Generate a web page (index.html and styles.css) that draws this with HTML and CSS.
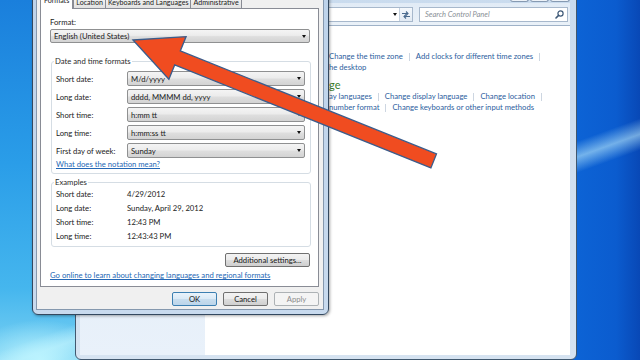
FILE: index.html
```html
<!DOCTYPE html>
<html lang="en">
<head>
<meta charset="utf-8">
<title>Region and Language</title>
<link rel="stylesheet" href="styles.css">
</head>
<body>
<div class="desktop">
  <section class="cp-window">
    <div class="cp-caption">
      <span class="cap-btn"></span><span class="cap-btn"></span><span class="cap-btn cap-close"></span>
    </div>
    <div class="cp-toolbar">
      <div class="address">
        <span class="addr-drop"><i class="caret"></i></span>
        <span class="addr-refresh">
          <svg width="10" height="9" viewBox="0 0 10 9"><path d="M1 3.5h6M5 1.5l2 2-2 2" fill="none" stroke="#4a6a8e" stroke-width="1.1"/><path d="M9 6.5H3M5 4.5l-2 2 2 2" fill="none" stroke="#4a6a8e" stroke-width="1.1"/></svg>
        </span>
      </div>
      <div class="search">
        <span class="search-text">Search Control Panel</span>
        <svg class="search-icon" width="9" height="9" viewBox="0 0 9 9"><circle cx="5.5" cy="3.5" r="2.6" fill="none" stroke="#3d5877" stroke-width="1.2"/><path d="M3.6 5.4L1 8" stroke="#3d5877" stroke-width="1.6" stroke-linecap="round"/></svg>
      </div>
    </div>
    <div class="cp-body">
      <nav class="cp-nav"></nav>
      <main class="cp-main">
        <p class="cp-line"><a>Change the time zone</a><i class="sep"></i><a>Add clocks for different time zones</a><i class="sep"></i></p>
        <p class="cp-line"><a>he desktop</a></p>
        <h2 class="cp-head">ge</h2>
        <p class="cp-line"><a>ay languages</a><i class="sep"></i><a>Change display language</a><i class="sep"></i><a>Change location</a><i class="sep"></i></p>
        <p class="cp-line"><a>number format</a><i class="sep"></i><a>Change keyboards or other input methods</a></p>
      </main>
    </div>
  </section>

  <section class="dialog">
    <div class="dlg-caption"></div>
    <div class="dlg-client">
      <div class="tabs">
        <span class="tab active">Formats</span>
        <span class="tab">Location</span>
        <span class="tab">Keyboards and Languages</span>
        <span class="tab">Administrative</span>
      </div>
      <div class="tab-panel">
        <div class="field-label">Format:</div>
        <div class="combo wide"><span>English (United States)</span><i class="caret"></i></div>

        <fieldset class="group formats">
          <legend>Date and time formats</legend>
          <div class="row"><span class="lbl">Short date:</span><div class="combo"><span>M/d/yyyy</span><i class="caret"></i></div></div>
          <div class="row"><span class="lbl">Long date:</span><div class="combo"><span>dddd, MMMM dd, yyyy</span><i class="caret"></i></div></div>
          <div class="row"><span class="lbl">Short time:</span><div class="combo"><span>h:mm tt</span><i class="caret"></i></div></div>
          <div class="row"><span class="lbl">Long time:</span><div class="combo"><span>h:mm:ss tt</span><i class="caret"></i></div></div>
          <div class="row"><span class="lbl">First day of week:</span><div class="combo"><span>Sunday</span><i class="caret"></i></div></div>
          <a class="link notation">What does the notation mean?</a>
        </fieldset>

        <fieldset class="group examples">
          <legend>Examples</legend>
          <div class="ex-row"><span class="lbl">Short date:</span><span>4/29/2012</span></div>
          <div class="ex-row"><span class="lbl">Long date:</span><span>Sunday, April 29, 2012</span></div>
          <div class="ex-row"><span class="lbl">Short time:</span><span>12:43 PM</span></div>
          <div class="ex-row"><span class="lbl">Long time:</span><span>12:43:43 PM</span></div>
        </fieldset>

        <div class="add-row"><button class="btn additional">Additional settings...</button></div>
        <a class="link online">Go online to learn about changing languages and regional formats</a>
      </div>
      <div class="dlg-buttons">
        <button class="btn default">OK</button>
        <button class="btn">Cancel</button>
        <button class="btn" disabled>Apply</button>
      </div>
    </div>
  </section>

  <svg class="arrow" width="640" height="360" viewBox="0 0 640 360">
    <polygon points="133,40 186.1,36.6 180.3,50.9 436.5,153.9 430.9,167.9 174.7,64.9 168.9,79.2" fill="#f04c20" stroke="#3b5d8c" stroke-width="1.3" stroke-linejoin="miter"/>
  </svg>
</div>
</body>
</html>
```

FILE: styles.css
```css
html, body {
  margin: 0;
  padding: 0;
}

body {
  font-family: Lato, "Open Sans", "Noto Sans", sans-serif;
  font-size: 7.7px;
  color: #1b1b1b;
}

.desktop {
  position: relative;
  width: 640px;
  height: 360px;
  overflow: hidden;
  background:
    radial-gradient(ellipse 70px 40px at 40px 360px, rgba(190, 245, 255, 0.95), rgba(190, 245, 255, 0) 100%),
    linear-gradient(160deg, rgba(255,255,255,0) 0px, rgba(255,255,255,0) 330px, rgba(200,245,255,0.55) 345px, rgba(255,255,255,0) 360px),
    linear-gradient(180deg, #1a7fdc 0%, #2a9de8 45%, #45b6ee 80%, #7cd2f3 100%) 0 0 / 80px 360px no-repeat,
    linear-gradient(90deg, #0d66d8 0%, #0b5ccf 70%, #0848b6 100%) 560px 0 / 80px 360px no-repeat,
    #0d60d2;
}

/* ---------- Control Panel window (behind) ---------- */
.cp-window {
  position: absolute;
  left: 75px;
  top: -20px;
  width: 502px;
  height: 380px;
  box-sizing: border-box;
  border: 1px solid #41586f;
  border-radius: 6px;
  background: linear-gradient(180deg, #c9dbee 0%, #d6e3f1 100%);
  padding: 0 6px 4px 4px;
  display: flex;
  flex-direction: column;
}

.cp-caption {
  height: 22px;
  flex: none;
  display: flex;
  justify-content: flex-end;
  align-items: flex-end;
  padding-bottom: 1px;
  box-sizing: border-box;
}

.cap-btn {
  width: 19px;
  height: 12px;
  box-sizing: border-box;
  border: 1px solid #8599b1;
  border-top: none;
  border-radius: 0 0 3px 3px;
  background: linear-gradient(180deg, #dbe6f2, #eef3f9);
  margin-left: 1px;
}

.cap-close {
  width: 20px;
}

.cp-toolbar {
  height: 22px;
  flex: none;
  display: flex;
  align-items: center;
  gap: 6px;
  padding: 0 2px 0 4px;
  background: linear-gradient(180deg, #e1ebf6, #eaf1f8);
}

.address {
  flex: 1;
  height: 15px;
  box-sizing: border-box;
  border: 1px solid #a7b8cc;
  background: #fff;
  display: flex;
  justify-content: flex-end;
  align-items: stretch;
}

.addr-drop {
  width: 9px;
  display: flex;
  align-items: center;
  justify-content: center;
}

.addr-refresh {
  width: 12px;
  border-left: 1px solid #c3d0de;
  background: linear-gradient(180deg, #f4f8fc, #e2eaf3);
  display: flex;
  align-items: center;
  justify-content: center;
}

.search {
  width: 149px;
  height: 15px;
  box-sizing: border-box;
  border: 1px solid #a7b8cc;
  background: #fff;
  display: flex;
  align-items: center;
  justify-content: space-between;
  padding: 0 3px 0 5px;
}

.search-text {
  font-style: italic;
  color: #8a8f96;
  font-size: 7.5px;
}

.cp-body {
  flex: 1;
  display: flex;
  border-top: 1px solid #9fb2c8;
  background: #fff;
  min-height: 0;
}

.cp-nav {
  width: 125px;
  flex: none;
  background: linear-gradient(180deg, #dce8f5 0%, #e9f1fa 100%);
}

.cp-main {
  flex: 1;
  padding: 25px 0 0 124px;
}

.cp-line {
  margin: 0;
  height: 11px;
  line-height: 11px;
  white-space: nowrap;
  display: flex;
  align-items: center;
}

.cp-line a {
  color: #2c5e9e;
}

.sep {
  width: 1px;
  height: 8px;
  background: #cdd6e1;
  margin: 0 6px;
}

.cp-head {
  margin: 5px 0 0;
  height: 13px;
  line-height: 13px;
  font-size: 11px;
  font-weight: normal;
  color: #3a7d2c;
}

/* ---------- Region and Language dialog ---------- */
.dialog {
  position: absolute;
  left: 32px;
  top: -30px;
  width: 297px;
  height: 345px;
  box-sizing: border-box;
  border: 1px solid #33485f;
  border-radius: 6px;
  background: linear-gradient(180deg, #bcd2ea 0%, #c8daee 100%);
  padding: 0 4px 4px 3px;
  display: flex;
  flex-direction: column;
  box-shadow: 1px 1px 3px rgba(0, 0, 0, 0.35);
}

.dlg-caption {
  height: 21px;
  flex: none;
}

.dlg-client {
  flex: 1;
  border: 1px solid #8598ae;
  background: #f0f0f0;
  padding: 2px 4px 3px 3px;
  display: flex;
  flex-direction: column;
  min-height: 0;
}

.tabs {
  display: flex;
  height: 13px;
  flex: none;
  position: relative;
  z-index: 1;
}

.tab {
  box-sizing: border-box;
  height: 13px;
  line-height: 13px;
  padding: 0 2px;
  border: 1px solid #898c95;
  border-bottom: none;
  margin-left: -1px;
  background: linear-gradient(180deg, #f6f6f6, #e2e2e2);
  white-space: nowrap;
  font-size: 7.1px;
}

.tab.active {
  margin-left: 0;
  margin-top: -2px;
  height: 16px;
  line-height: 14px;
  padding: 0 3px;
  background: #fff;
  margin-right: 1px;
}

.tab-panel {
  flex: 1;
  border: 1px solid #898c95;
  background: #fff;
  padding: 9px 7px 0 9px;
  display: flex;
  flex-direction: column;
  min-height: 0;
}

.field-label {
  line-height: 9px;
  height: 9px;
}

.combo {
  display: flex;
  align-items: center;
  justify-content: space-between;
  box-sizing: border-box;
  height: 15px;
  border: 1px solid #8f9091;
  border-radius: 2px;
  background: linear-gradient(180deg, #f4f4f4 0%, #ececec 45%, #dedede 55%, #d3d3d3 100%);
  padding: 0 3px 0 3px;
  white-space: nowrap;
}

.combo.wide {
  height: 14px;
  margin-top: 2px;
  width: 260px;
}

.caret {
  width: 0;
  height: 0;
  border-left: 2.5px solid transparent;
  border-right: 2.5px solid transparent;
  border-top: 3px solid #111;
}

.group {
  margin: 0;
  border: 1px solid #d5dde4;
  border-radius: 3px;
  min-width: 0;
  margin-left: 1px;
}

.group legend {
  padding: 0 1px;
  margin-left: -2px;
  line-height: 9px;
  height: 9px;
  color: #2b2b2b;
}

.formats {
  margin-top: 14px;
  padding: 5px 5px 4px 4px;
}

.row {
  display: flex;
  height: 15px;
  align-items: stretch;
}

.row + .row {
  margin-top: 3px;
}

.row .lbl {
  width: 71px;
  flex: none;
  display: flex;
  align-items: center;
}

.row .combo {
  flex: 1;
}

.link {
  color: #2467b5;
  text-decoration: underline;
  line-height: 9px;
  height: 9px;
  display: block;
  white-space: nowrap;
}

.notation {
  margin-top: 2px;
}

.examples {
  margin-top: 4px;
  padding: 0 5px 3px 4px;
}

.ex-row {
  display: flex;
  height: 14px;
  align-items: center;
}

.ex-row .lbl {
  width: 71px;
  flex: none;
}

.add-row {
  display: flex;
  justify-content: flex-end;
  margin-top: 6px;
  padding-right: 1px;
}

.online {
  margin-top: 4px;
}

.btn {
  font: inherit;
  color: #151515;
  width: 45px;
  height: 14px;
  padding: 0;
  box-sizing: border-box;
  border: 1px solid #707070;
  border-radius: 2px;
  background: linear-gradient(180deg, #f3f3f3 0%, #ebebeb 48%, #dddddd 52%, #cfcfcf 100%);
  white-space: nowrap;
}

.btn.additional {
  width: 85px;
}

.btn.default {
  border-color: #3c7fb1;
  background: linear-gradient(180deg, #e9f3fb 0%, #dbeaf6 48%, #c8ddee 52%, #bcd5ea 100%);
}

.btn:disabled {
  border-color: #adb2b5;
  background: #f4f4f4;
  color: #8c8c8c;
}

.dlg-buttons {
  flex: none;
  display: flex;
  justify-content: flex-end;
  gap: 6px;
  margin-top: 5px;
}

/* ---------- annotation arrow ---------- */
.arrow {
  position: absolute;
  left: 0;
  top: 0;
  pointer-events: none;
}
```
